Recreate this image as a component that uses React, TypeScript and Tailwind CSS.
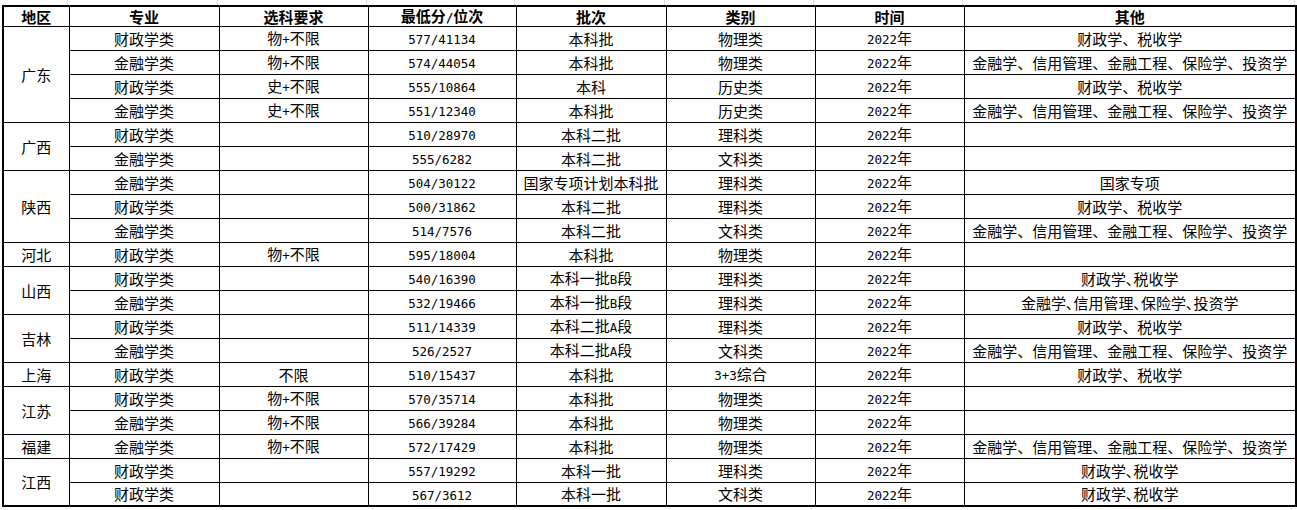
import React from 'react';

type Row = [string, string, string, string, string, string, string];

const FULL = '金融学、信用管理、金融工程、保险学、投资学';
const CZ = '财政学、税收学';

const groups: { region: string; rows: Row[] }[] = [
  {
    region: '广东',
    rows: [
      ['财政学类', '物+不限', '577/41134', '本科批', '物理类', '2022年', CZ],
      ['金融学类', '物+不限', '574/44054', '本科批', '物理类', '2022年', FULL],
      ['财政学类', '史+不限', '555/10864', '本科', '历史类', '2022年', CZ],
      ['金融学类', '史+不限', '551/12340', '本科批', '历史类', '2022年', FULL],
    ],
  },
  {
    region: '广西',
    rows: [
      ['财政学类', '', '510/28970', '本科二批', '理科类', '2022年', ''],
      ['金融学类', '', '555/6282', '本科二批', '文科类', '2022年', ''],
    ],
  },
  {
    region: '陕西',
    rows: [
      ['金融学类', '', '504/30122', '国家专项计划本科批', '理科类', '2022年', '国家专项'],
      ['财政学类', '', '500/31862', '本科二批', '理科类', '2022年', CZ],
      ['金融学类', '', '514/7576', '本科二批', '文科类', '2022年', FULL],
    ],
  },
  {
    region: '河北',
    rows: [['财政学类', '物+不限', '595/18004', '本科批', '物理类', '2022年', '']],
  },
  {
    region: '山西',
    rows: [
      ['财政学类', '', '540/16390', '本科一批B段', '理科类', '2022年', '财政学､税收学'],
      ['金融学类', '', '532/19466', '本科一批B段', '理科类', '2022年', '金融学､信用管理､保险学､投资学'],
    ],
  },
  {
    region: '吉林',
    rows: [
      ['财政学类', '', '511/14339', '本科二批A段', '理科类', '2022年', CZ],
      ['金融学类', '', '526/2527', '本科二批A段', '文科类', '2022年', FULL],
    ],
  },
  {
    region: '上海',
    rows: [['财政学类', '不限', '510/15437', '本科批', '3+3综合', '2022年', CZ]],
  },
  {
    region: '江苏',
    rows: [
      ['财政学类', '物+不限', '570/35714', '本科批', '物理类', '2022年', ''],
      ['金融学类', '物+不限', '566/39284', '本科批', '物理类', '2022年', ''],
    ],
  },
  {
    region: '福建',
    rows: [['金融学类', '物+不限', '572/17429', '本科批', '物理类', '2022年', FULL]],
  },
  {
    region: '江西',
    rows: [
      ['财政学类', '', '557/19292', '本科一批', '理科类', '2022年', '财政学､税收学'],
      ['财政学类', '', '567/3612', '本科一批', '文科类', '2022年', '财政学､税收学'],
    ],
  },
];

const headers = ['地区', '专业', '选科要求', '最低分/位次', '批次', '类别', '时间', '其他'];
const widths = [66, 150, 149, 148, 150, 149, 149, 332];

// SimSun-style: latin runs are half-width
function Txt({ s }: { s: string }) {
  const parts = s.split(/([\x20-\x7e]+)/).filter(Boolean);
  return (
    <>
      {parts.map((p, i) =>
        /^[\x20-\x7e]+$/.test(p) ? (
          <span key={i} className="font-['DejaVu_Sans_Mono'] text-[12.5px]">
            {p}
          </span>
        ) : (
          <span key={i}>{p}</span>
        ),
      )}
    </>
  );
}

export default function App() {
  return (
    <div className="h-[510px] w-[1297px] overflow-hidden bg-white font-['Noto_Sans_CJK_SC',sans-serif] text-[15px] leading-none text-black">
      <div className="ml-[2px] flex h-[5px]">
        {widths.map((w, i) => (
          <div key={i} className="border-r border-[#dadada]" style={{ width: w }} />
        ))}
      </div>
      <table className="ml-[2px] w-[1293px] table-fixed border-collapse border-2 border-black">
        <colgroup>
          {widths.map((w, i) => (
            <col key={i} style={{ width: w }} />
          ))}
        </colgroup>
        <thead>
          <tr className="h-[20px]">
            {headers.map((h) => (
              <th key={h} className="border border-black p-0 text-center align-middle font-bold">
                <Txt s={h} />
              </th>
            ))}
          </tr>
        </thead>
        <tbody>
          {groups.map((g) =>
            g.rows.map((r, ri) => (
              <tr key={g.region + ri} className="h-[24px]">
                {ri === 0 && (
                  <td rowSpan={g.rows.length} className="border border-black p-0 text-center align-middle">
                    {g.region}
                  </td>
                )}
                {r.map((c, ci) => (
                  <td key={ci} className="whitespace-nowrap border border-black p-0 text-center align-middle">
                    <Txt s={c} />
                  </td>
                ))}
              </tr>
            )),
          )}
        </tbody>
      </table>
    </div>
  );
}
